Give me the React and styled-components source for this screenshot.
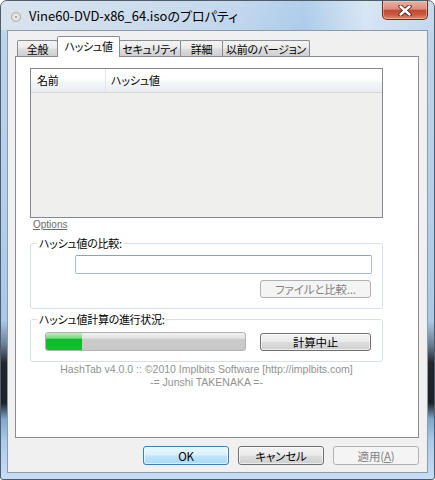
import React from 'react';
import styled, { createGlobalStyle } from 'styled-components';

const GlobalStyle = createGlobalStyle`
    * {
        box-sizing: border-box;
    }
    html, body {
        margin: 0;
        padding: 0;
        background: #ffffff;
    }
    body {
        font-family: "Noto Sans CJK JP", sans-serif;
        font-feature-settings: "palt";
        color: #000000;
    }
`;

const tabs = [
    { label: '全般', w: 41 },
    { label: 'ハッシュ値', w: 63, active: true },
    { label: 'セキュリティ', w: 62 },
    { label: '詳細', w: 43 },
    { label: '以前のバージョン', w: 88 },
];

const progress = 18;

const App = () => {
    return (
        <>
            <GlobalStyle />
            <Window>
                <TitleBar>
                    <DiscIcon width="10" height="10" viewBox="0 0 10 10">
                        <circle cx="5" cy="5" r="4.6" fill="#d8d8d8" stroke="#9a9a9a" strokeWidth="0.6" />
                        <circle cx="5" cy="5" r="2.6" fill="#eeeeee" />
                        <circle cx="5" cy="5" r="1" fill="#8a8a8a" />
                    </DiscIcon>
                    <Title>Vine60-DVD-x86_64.isoのプロパティ</Title>
                    <CloseButton>
                        <svg width="14" height="11" viewBox="0 0 14 11">
                            <path d="M2.5 1.5 L11.5 9.5 M11.5 1.5 L2.5 9.5" stroke="#4a1d16" strokeWidth="4.2" strokeLinecap="round" />
                            <path d="M2.5 1.5 L11.5 9.5 M11.5 1.5 L2.5 9.5" stroke="#ffffff" strokeWidth="2.4" strokeLinecap="round" />
                        </svg>
                    </CloseButton>
                </TitleBar>
                <Client>
                    <TabStrip>
                        {tabs.map((t, i) => (
                            <Tab key={t.label} $w={t.w} $active={t.active} $first={i === 0}>
                                {t.label}
                            </Tab>
                        ))}
                    </TabStrip>
                    <Panel>
                        <ListView>
                            <ListHeader>
                                <HeaderCell $w={75}>名前</HeaderCell>
                                <HeaderCell>ハッシュ値</HeaderCell>
                            </ListHeader>
                            <ListBody />
                        </ListView>
                        <OptionsLink>Options</OptionsLink>
                        <Group $mt={5}>
                            <Legend>ハッシュ値の比較:</Legend>
                            <HashInput />
                            <ButtonRight>
                                <Button $w={111} $h={18} $variant="disabled">ファイルと比較...</Button>
                            </ButtonRight>
                        </Group>
                        <Group $mt={3}>
                            <Legend>ハッシュ値計算の進行状況:</Legend>
                            <ProgressRow>
                                <ProgressBar>
                                    <ProgressFill style={{ width: `${progress}%` }} />
                                </ProgressBar>
                                <Button $w={111} $h={18}>計算中止</Button>
                            </ProgressRow>
                        </Group>
                        <Credits>
                            HashTab v4.0.0 :: ©2010 Implbits Software [http://implbits.com]
                            <br />
                            -= Junshi TAKENAKA =-
                        </Credits>
                    </Panel>
                    <DialogButtons>
                        <Button $w={86} $h={19} $variant="primary">OK</Button>
                        <Button $w={86} $h={19}>キャンセル</Button>
                        <Button $w={86} $h={19} $variant="disabled">
                            適用(<u>A</u>)
                        </Button>
                    </DialogButtons>
                </Client>
            </Window>
        </>
    );
};

const Window = styled.div`
    width: 435px;
    height: 480px;
    display: flex;
    flex-direction: column;
    border: 1px solid #4f5d6b;
    border-radius: 7px 7px 3px 3px;
    overflow: hidden;
    background: linear-gradient(
        180deg,
        #c9dcef 0px,
        #bcd4ec 40px,
        #b3cfeb 200px,
        #a9c9ea 320px,
        #66798e 345px,
        #22262c 362px,
        #1d2026 402px,
        #7fa6cf 418px,
        #a9cbee 440px,
        #c8def5 480px
    );
`;

const TitleBar = styled.div`
    height: 29px;
    flex-shrink: 0;
    display: flex;
    align-items: flex-start;
    background: linear-gradient(
        90deg,
        rgba(222, 230, 239, 0.8) 0%,
        rgba(210, 223, 237, 0.65) 30%,
        rgba(190, 212, 236, 0.45) 55%,
        rgba(150, 190, 232, 0.45) 70%,
        rgba(222, 233, 245, 0.75) 84%,
        rgba(196, 216, 238, 0.55) 100%
    );
`;

const DiscIcon = styled.svg`
    margin: 11px 0 0 10px;
    flex-shrink: 0;
`;

const Title = styled.div`
    margin: 6px 0 0 8px;
    font-size: 13px;
    line-height: 17px;
    color: #000000;
    white-space: nowrap;
`;

const CloseButton = styled.div`
    margin-left: auto;
    margin-right: 6px;
    width: 46px;
    height: 19px;
    display: flex;
    align-items: center;
    justify-content: center;
    border: 1px solid #6e2c22;
    border-top: none;
    border-radius: 0 0 5px 5px;
    background: linear-gradient(
        180deg,
        #eab0a3 0%,
        #dc8d7b 45%,
        #c7472f 52%,
        #c85a42 75%,
        #dc8c72 100%
    );
    box-shadow: inset 0 0 0 1px rgba(255, 210, 200, 0.45);
`;

const Client = styled.div`
    flex: 1;
    margin: 0 6px 6px;
    border: 1px solid #8e9aa8;
    background: #f0f0f0;
    display: flex;
    flex-direction: column;
    padding: 5px 8px 7px 7px;
`;

const TabStrip = styled.div`
    height: 20px;
    display: flex;
    align-items: flex-end;
    padding-left: 2px;
    flex-shrink: 0;
`;

const Tab = styled.div`
    width: ${(p) => p.$w}px;
    height: ${(p) => (p.$active ? 21 : 16)}px;
    margin-left: ${(p) => (p.$first ? 0 : -1)}px;
    margin-bottom: ${(p) => (p.$active ? -1 : 0)}px;
    border: 1px solid #898c95;
    border-bottom: none;
    border-radius: 2px 2px 0 0;
    background: ${(p) =>
        p.$active ? '#ffffff' : 'linear-gradient(180deg, #f4f4f4 0%, #ebebeb 45%, #dddddd 55%, #cfcfcf 100%)'};
    z-index: ${(p) => (p.$active ? 2 : 1)};
    position: relative;
    display: flex;
    align-items: center;
    justify-content: center;
    padding-bottom: ${(p) => (p.$active ? 2 : 0)}px;
    font-size: 11px;
    letter-spacing: -0.3px;
    white-space: nowrap;
`;

const Panel = styled.div`
    flex: 1;
    background: #ffffff;
    border: 1px solid #898c95;
    padding: 11px 0 0 14px;
    display: flex;
    flex-direction: column;
`;

const ListView = styled.div`
    width: 353px;
    height: 150px;
    border: 1px solid #828790;
    display: flex;
    flex-direction: column;
    flex-shrink: 0;
`;

const ListHeader = styled.div`
    height: 24px;
    display: flex;
    border-bottom: 1px solid #d5d5d5;
    background: linear-gradient(180deg, #ffffff 0%, #ffffff 40%, #f3f6f9 60%, #e9eef3 100%);
`;

const HeaderCell = styled.div`
    width: ${(p) => (p.$w ? `${p.$w}px` : 'auto')};
    flex: ${(p) => (p.$w ? 'none' : 1)};
    border-right: ${(p) => (p.$w ? '1px solid #e2e5e9' : 'none')};
    padding-left: ${(p) => (p.$w ? 6 : 5)}px;
    font-size: 11px;
    line-height: 23px;
    letter-spacing: -0.2px;
`;

const ListBody = styled.div`
    flex: 1;
    background: #eff0ee;
`;

const OptionsLink = styled.a`
    align-self: flex-start;
    margin-left: 3px;
    font-family: "Liberation Sans", Arial, sans-serif;
    font-size: 10px;
    line-height: 13px;
    color: #6c6c6c;
    text-decoration: underline;
`;

const Group = styled.fieldset`
    width: 353px;
    margin: ${(p) => p.$mt}px 0 0;
    border: 1px solid #d5dfe5;
    border-radius: 3px;
    padding: 5px 10px 10px 0;
    min-width: 0;
    display: flex;
    flex-direction: column;
`;

const Legend = styled.legend`
    margin-left: 6px;
    padding: 0 2px;
    font-size: 11px;
    line-height: 14px;
    letter-spacing: -0.3px;
`;

const HashInput = styled.div`
    margin-left: 44px;
    height: 19px;
    border: 1px solid #a7bbcd;
    border-top-color: #8aa3ba;
    border-radius: 2px;
    background: #ffffff;
`;

const ButtonRight = styled.div`
    display: flex;
    justify-content: flex-end;
    margin-top: 6px;
    padding-right: 1px;
`;

const Button = styled.div`
    width: ${(p) => p.$w}px;
    height: ${(p) => p.$h}px;
    flex-shrink: 0;
    display: flex;
    align-items: center;
    justify-content: center;
    border-radius: 3px;
    font-size: 11.5px;
    letter-spacing: -0.2px;
    white-space: nowrap;
    border: 1px solid
        ${(p) => (p.$variant === 'primary' ? '#3c7fb1' : p.$variant === 'disabled' ? '#adb2b5' : '#707070')};
    color: ${(p) => (p.$variant === 'disabled' ? '#838383' : '#000000')};
    background: ${(p) =>
        p.$variant === 'primary'
            ? 'linear-gradient(180deg, #eaf6fd 0%, #d9f0fc 48%, #bee6fd 52%, #a7d9f5 100%)'
            : p.$variant === 'disabled'
            ? '#f4f4f4'
            : 'linear-gradient(180deg, #f2f2f2 0%, #ebebeb 48%, #dddddd 52%, #cfcfcf 100%)'};
    box-shadow: ${(p) => (p.$variant === 'disabled' ? 'none' : 'inset 0 0 0 1px rgba(255,255,255,0.6)')};

    u {
        text-decoration: underline;
    }
`;

const ProgressRow = styled.div`
    display: flex;
    align-items: center;
    gap: 14px;
    margin-top: 1px;
    padding-left: 14px;
`;

const ProgressBar = styled.div`
    width: 201px;
    height: 19px;
    border: 1px solid #b2b2b2;
    border-radius: 3px;
    overflow: hidden;
    background: linear-gradient(180deg, #f2f2f2 0%, #e2e2e2 30%, #cbcbcb 38%, #c8c8c8 100%);
`;

const ProgressFill = styled.div`
    height: 100%;
    background: linear-gradient(180deg, #bdf0bd 0%, #78dc78 30%, #0bbd2b 38%, #12c425 100%);
`;

const Credits = styled.div`
    width: 353px;
    margin-top: 1px;
    text-align: center;
    font-family: "Liberation Sans", Arial, sans-serif;
    font-size: 10.5px;
    line-height: 13px;
    color: #929292;
`;

const DialogButtons = styled.div`
    display: flex;
    justify-content: flex-end;
    gap: 9px;
    margin-top: 8px;
    flex-shrink: 0;
`;

export default App;
